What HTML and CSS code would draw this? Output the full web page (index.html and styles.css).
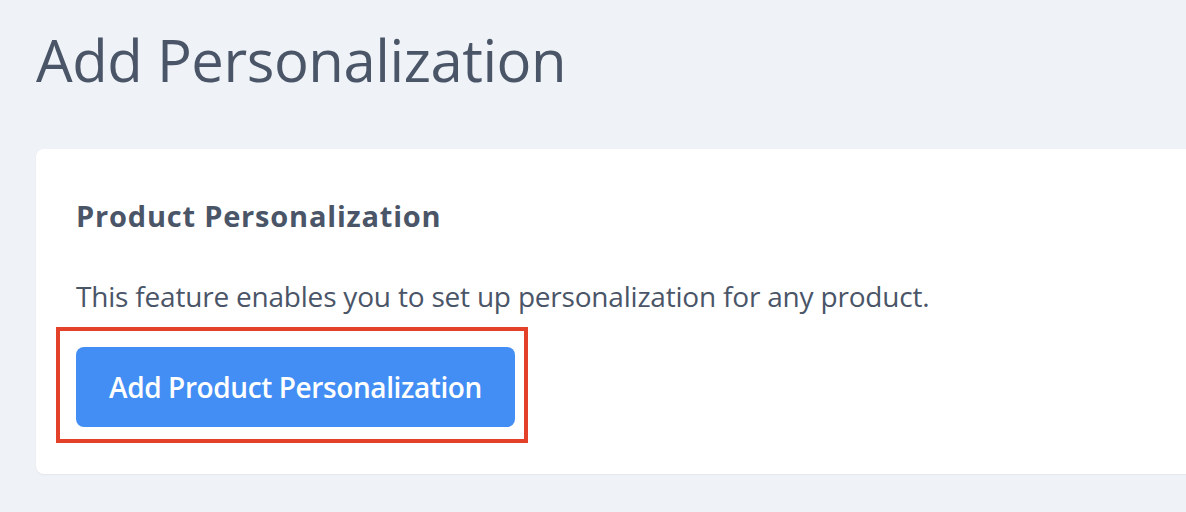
FILE: index.html
```html
<!DOCTYPE html>
<html lang="en">
<head>
<meta charset="utf-8">
<title>Add Personalization</title>
<link rel="stylesheet" href="styles.css">
</head>
<body>
<main class="page">
  <h1 class="page-title">Add Personalization</h1>
  <section class="card">
    <h2 class="card-title">Product Personalization</h2>
    <p class="card-text">This feature enables you to set up personalization for any product.</p>
    <div class="highlight">
      <button class="btn-primary" type="button">Add Product Personalization</button>
    </div>
  </section>
</main>
</body>
</html>
```

FILE: styles.css
```css
html, body {
  margin: 0;
  padding: 0;
  background: #eff2f6;
  overflow: hidden;
}

body {
  font-family: "Open Sans", "Noto Sans", sans-serif;
  color: #4a5568;
  width: 1186px;
  height: 512px;
}

.page {
  padding: 20px 0 0 36px;
}

.page-title {
  margin: 0;
  font-size: 58px;
  line-height: 80px;
  font-weight: 400;
  letter-spacing: -0.45px;
  color: #4a5568;
}

.card {
  margin-top: 49px;
  margin-right: -40px;
  background: #ffffff;
  border-radius: 8px;
  box-shadow: 0 1px 2px rgba(0, 0, 0, 0.05);
  padding: 49px 40px 31px 40px;
}

.card-title {
  margin: 0;
  font-size: 29px;
  line-height: 36px;
  font-weight: 700;
  letter-spacing: 0.8px;
  color: #4a5568;
}

.card-text {
  margin: 44px 0 0 0;
  font-size: 28px;
  line-height: 36px;
  letter-spacing: -0.2px;
  color: #4a5568;
}

.highlight {
  display: flex;
  width: fit-content;
  margin: 13px 0 0 -20px;
  border: 4px solid #e4412b;
  padding: 16px 9px 12px 16px;
}

.btn-primary {
  display: block;
  width: 439px;
  height: 80px;
  border: none;
  border-radius: 8px;
  background: #428ef5;
  color: #ffffff;
  font-family: inherit;
  font-size: 28px;
  font-weight: 600;
  letter-spacing: -0.4px;
  padding: 0;
}
```
